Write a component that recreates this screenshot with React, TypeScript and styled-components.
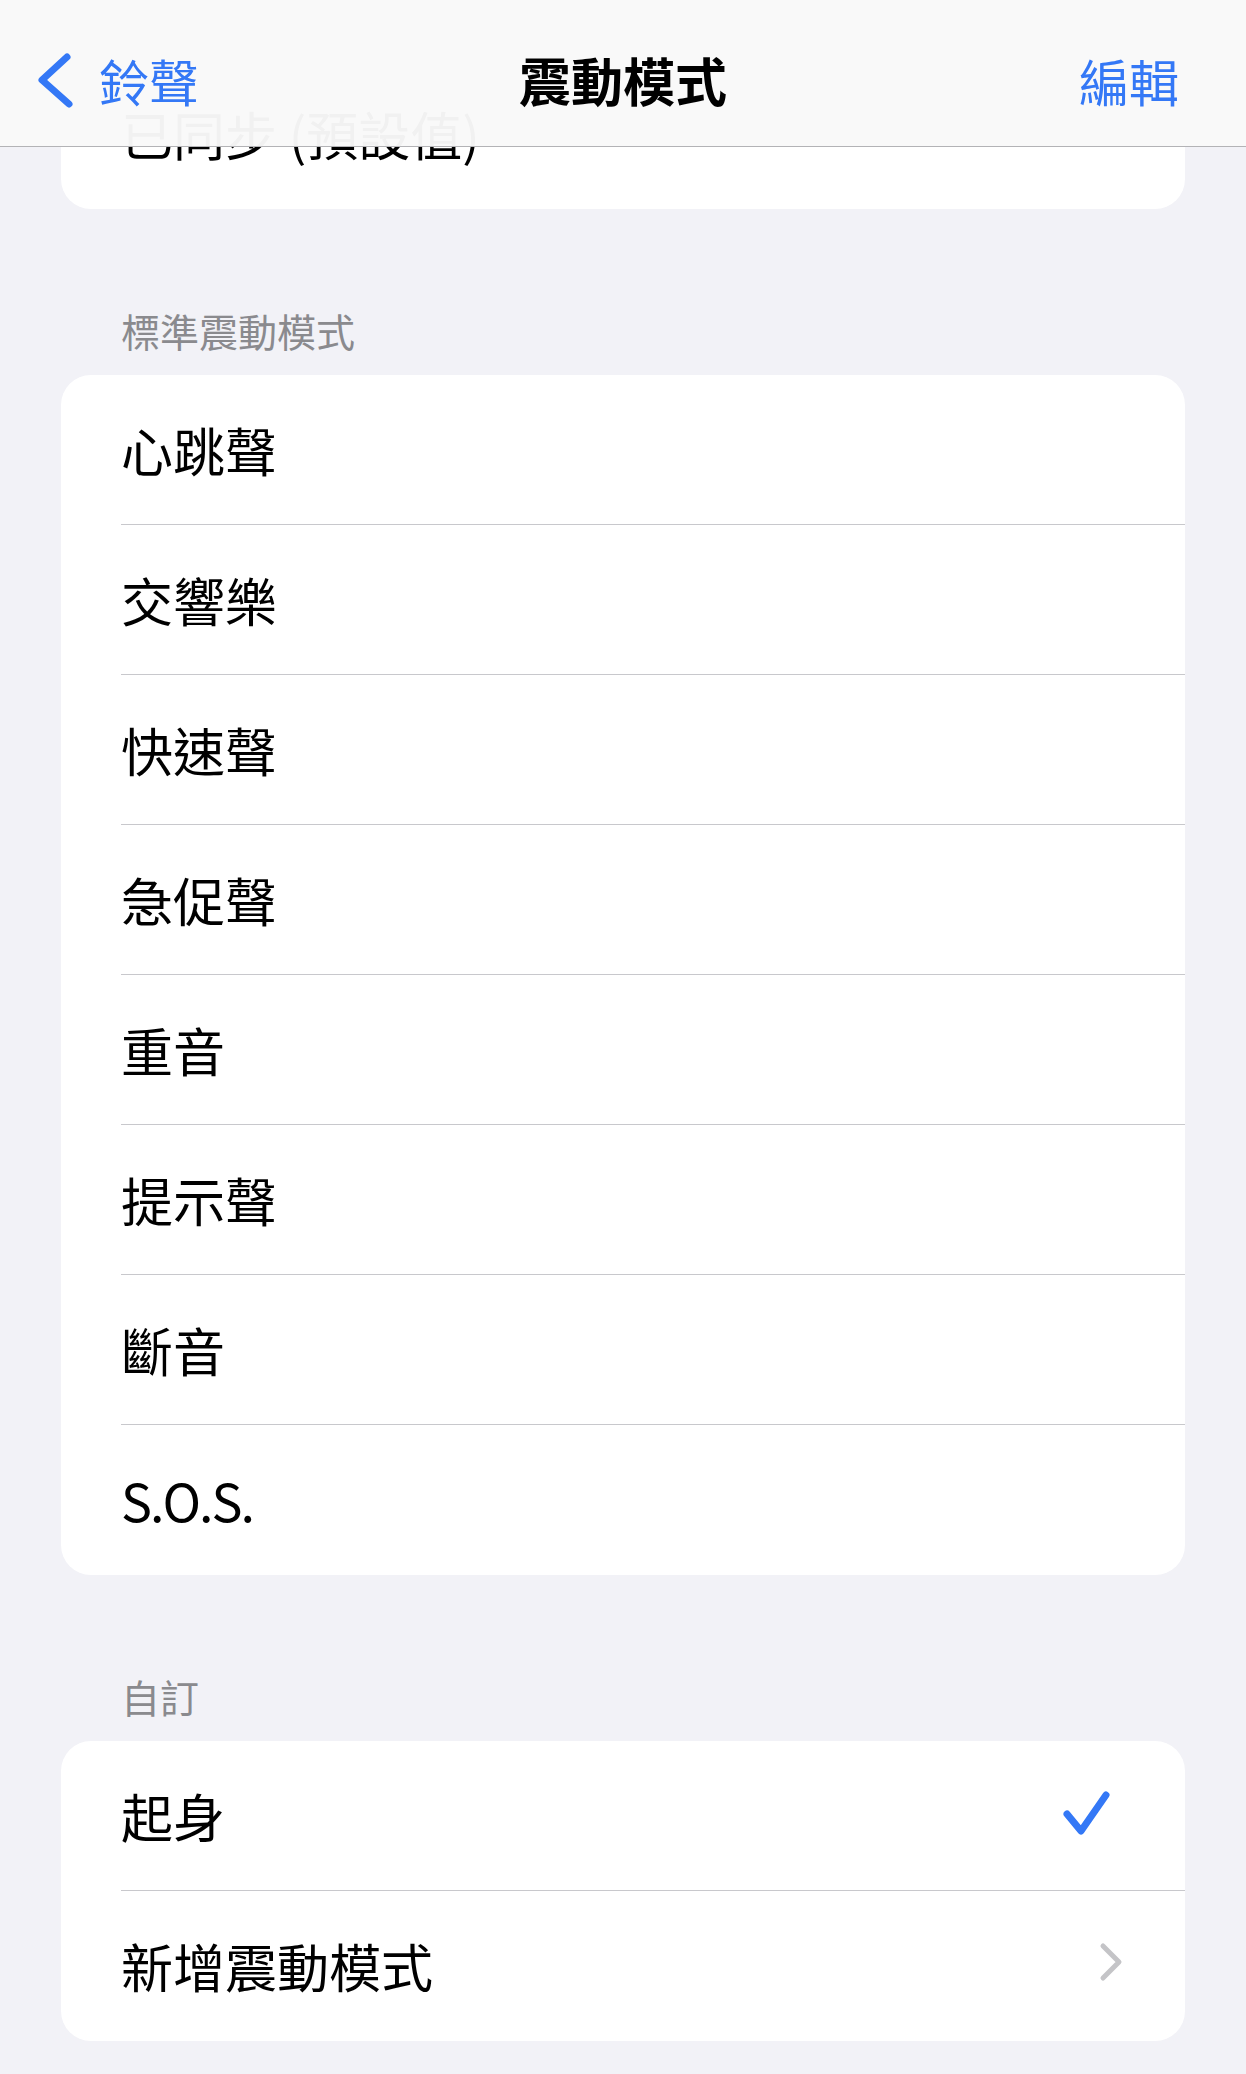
import React from 'react';
import styled, { createGlobalStyle } from 'styled-components';

const GlobalStyle = createGlobalStyle`
  html, body {
    margin: 0;
    padding: 0;
    background: #f2f2f7;
  }
  body {
    font-family: "Noto Sans CJK TC", "Noto Sans", sans-serif;
    -webkit-font-smoothing: antialiased;
  }
`;

const Page = styled.div`
  position: relative;
  width: 1246px;
  height: 2074px;
  overflow: hidden;
  background: #f2f2f7;
`;

const NavBar = styled.header`
  position: absolute;
  top: 0;
  left: 0;
  right: 0;
  z-index: 2;
  height: 147px;
  box-sizing: border-box;
  padding: 13px 50px 0;
  display: grid;
  grid-template-columns: 1fr auto 1fr;
  align-items: center;
  background: rgba(249, 249, 249, 0.97);
  border-bottom: 1px solid #b3b3b6;
`;

const BackButton = styled.div`
  display: flex;
  align-items: center;
  gap: 23px;
  margin-left: -18px;
  color: #3478f6;
  font-size: 50px;
  line-height: 1;
`;

const NavTitle = styled.h1`
  margin: 0;
  font-size: 52px;
  font-weight: 700;
  color: #000;
  line-height: 1;
`;

const NavAction = styled.div`
  justify-self: end;
  margin-right: 17px;
  color: #3478f6;
  font-size: 50px;
  line-height: 1;
`;

const Content = styled.main`
  display: flex;
  flex-direction: column;
  padding: 59px 61px 0;
`;

const SectionHeader = styled.div`
  margin: 97px 0 21px 60px;
  height: 48px;
  font-size: 39px;
  line-height: 48px;
  color: #8a8a8e;
`;

const Card = styled.section`
  background: #fff;
  border-radius: 30px;
  overflow: hidden;
`;

const Row = styled.div<{ $last?: boolean }>`
  position: relative;
  height: 150px;
  box-sizing: border-box;
  margin-left: 60px;
  padding-right: 62px;
  display: flex;
  align-items: center;
  justify-content: space-between;
  border-bottom: ${({ $last }) => ($last ? 'none' : '1.5px solid #c8c8cc')};
`;

const RowLabel = styled.span<{ $latin?: boolean }>`
  font-size: 52px;
  color: #000;
  line-height: 1;
  letter-spacing: ${({ $latin }) => ($latin ? '-2px' : '0')};
`;

const CheckIcon = styled.svg`
  margin-right: 13px;
  margin-top: -6px;
`;

const Chevron = styled.svg`
  margin-top: -8px;
`;

const standard = ['心跳聲', '交響樂', '快速聲', '急促聲', '重音', '提示聲', '斷音', 'S.O.S.'];

export default function App() {
  return (
    <Page>
      <GlobalStyle />
      <NavBar>
        <BackButton>
          <svg width="44" height="64" viewBox="0 0 44 64">
            <path
              d="M35 9 L10 32 L37 56"
              fill="none"
              stroke="#3478f6"
              strokeWidth="7"
              strokeLinecap="round"
              strokeLinejoin="round"
            />
          </svg>
          <span>鈴聲</span>
        </BackButton>
        <NavTitle>震動模式</NavTitle>
        <NavAction>編輯</NavAction>
      </NavBar>

      <Content>
        <Card>
          <Row $last>
            <RowLabel>已同步 (預設值)</RowLabel>
          </Row>
        </Card>

        <SectionHeader>標準震動模式</SectionHeader>
        <Card>
          {standard.map((name, i) => (
            <Row key={name} $last={i === standard.length - 1}>
              <RowLabel $latin={/^[A-Z.]+$/.test(name)}>{name}</RowLabel>
            </Row>
          ))}
        </Card>

        <SectionHeader>自訂</SectionHeader>
        <Card>
          <Row>
            <RowLabel>起身</RowLabel>
            <CheckIcon width="50" height="50" viewBox="0 0 50 50">
              <path
                d="M7 26 L21 43 L46 7"
                fill="none"
                stroke="#3478f6"
                strokeWidth="7"
                strokeLinecap="round"
                strokeLinejoin="round"
              />
            </CheckIcon>
          </Row>
          <Row $last>
            <RowLabel>新增震動模式</RowLabel>
            <Chevron width="24" height="40" viewBox="0 0 24 40">
              <path
                d="M4 4 L20 20 L4 36"
                fill="none"
                stroke="#c4c4c7"
                strokeWidth="5"
                strokeLinecap="round"
                strokeLinejoin="round"
              />
            </Chevron>
          </Row>
        </Card>
      </Content>
    </Page>
  );
}
